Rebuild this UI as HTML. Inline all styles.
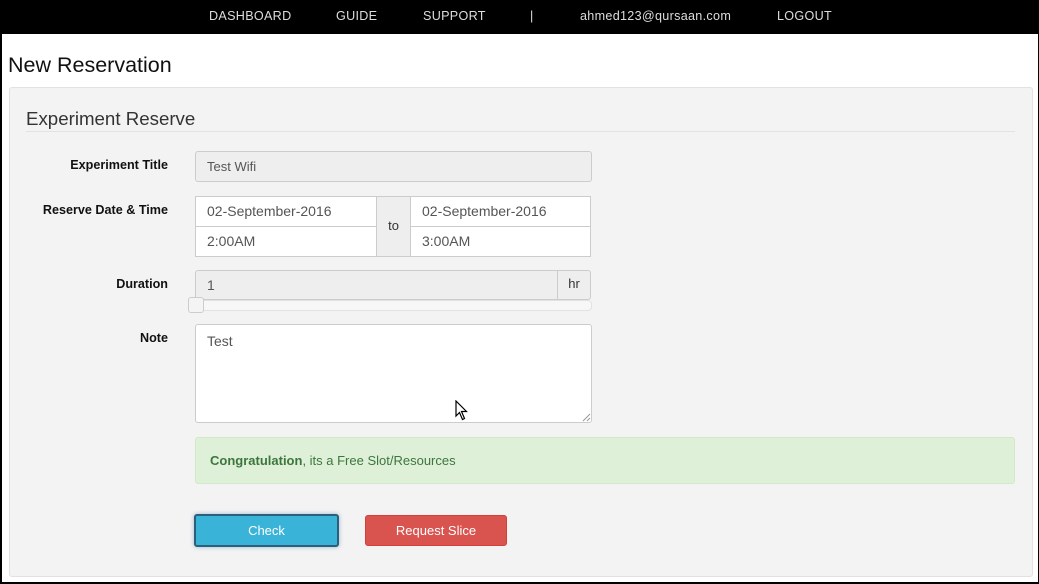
<!DOCTYPE html>
<html><head><meta charset="utf-8"><style>
*{box-sizing:border-box;margin:0;padding:0}
body{width:1039px;height:584px;background:#000;position:relative;overflow:hidden;font-family:"Liberation Sans",sans-serif;}
.a{position:absolute}
#page{left:2px;top:34px;width:1036px;height:548px;background:#fff}
.nav{top:0;height:34px;color:#ddd;font-size:12.6px;line-height:33px;letter-spacing:.3px}
.well{left:9px;top:87px;width:1024px;height:490px;background:#f3f3f3;border:1px solid #e2e2e2;border-radius:3px}
.lbl{font-size:12.6px;font-weight:bold;color:#111;text-align:right;width:168px;left:0}
.inp{background:#fff;border:1px solid #ccc;font-size:14px;color:#555;padding-left:11px}
</style></head><body>
<div class="a" id="page"></div>
<div class="a nav" style="left:209px">DASHBOARD</div>
<div class="a nav" style="left:336px">GUIDE</div>
<div class="a nav" style="left:423px">SUPPORT</div>
<div class="a nav" style="left:530px">|</div>
<div class="a nav" style="left:580px">ahmed123@qursaan.com</div>
<div class="a nav" style="left:777px">LOGOUT</div>
<div class="a" style="left:8px;top:53px;font-size:21.5px;color:#111">New Reservation</div>
<div class="a well"></div>
<div class="a" style="left:26px;top:108px;font-size:18.7px;color:#333">Experiment Reserve</div>
<div class="a" style="left:26px;top:131px;width:989px;height:1px;background:#e2e2e2"></div>

<div class="a lbl" style="top:158px">Experiment Title</div>
<div class="a inp" style="left:195px;top:151px;width:397px;height:31px;background:#eee;border-radius:3px;line-height:29px;font-size:13px">Test Wifi</div>

<div class="a lbl" style="top:203px">Reserve Date &amp; Time</div>
<div class="a inp" style="left:195px;top:196px;width:182px;height:31px;line-height:29px">02-September-2016</div>
<div class="a inp" style="left:195px;top:226px;width:182px;height:31px;line-height:29px">2:00AM</div>
<div class="a" style="left:376px;top:196px;width:35px;height:61px;background:#eee;border:1px solid #ccc;font-size:13px;color:#333;text-align:center;line-height:58px">to</div>
<div class="a inp" style="left:410px;top:196px;width:181px;height:31px;line-height:29px">02-September-2016</div>
<div class="a inp" style="left:410px;top:226px;width:181px;height:31px;line-height:29px">3:00AM</div>

<div class="a lbl" style="top:277px">Duration</div>
<div class="a inp" style="left:195px;top:270px;width:363px;height:30px;background:#eee;line-height:29px;border-radius:3px 0 0 3px">1</div>
<div class="a" style="left:557px;top:270px;width:34px;height:30px;background:#eee;border:1px solid #ccc;border-radius:0 3px 3px 0;font-size:13px;color:#333;text-align:center;line-height:26px">hr</div>
<div class="a" style="left:195px;top:300px;width:397px;height:11px;background:#f7f7f7;border:1px solid #e2e2e2;border-radius:4px"></div>
<div class="a" style="left:188px;top:297px;width:16px;height:16px;background:#f4f4f4;border:1px solid #ccc;border-radius:3px"></div>

<div class="a lbl" style="top:331px">Note</div>
<div class="a inp" style="left:195px;top:324px;width:397px;height:99px;border-radius:3px;padding-top:8px">Test</div>
<svg class="a" style="left:582px;top:413px" width="9" height="9"><path d="M1 8L8 1M5 8L8 5" stroke="#999" stroke-width="1"/></svg>
<svg class="a" style="left:455px;top:400px" width="14" height="21"><path d="M1 1L1 16L4.5 12.5L7.5 19.5L9.5 18.5L6.5 11.5L11.5 11.5Z" fill="#fff" stroke="#000" stroke-width="1.2"/></svg>

<div class="a" style="left:195px;top:437px;width:820px;height:47px;background:#dff0d8;border:1px solid #d0e9c6;border-radius:3px;color:#3c763d;font-size:13px;line-height:46px;padding-left:14px"><b>Congratulation</b>, its a Free Slot/Resources</div>

<div class="a" style="left:194px;top:514px;width:145px;height:33px;background:#39b3d7;border:2px solid #2d5f78;border-radius:3px;color:#fff;font-size:13px;text-align:center;line-height:29px;box-shadow:0 0 4px rgba(60,120,180,.5)">Check</div>
<div class="a" style="left:365px;top:515px;width:142px;height:31px;background:#d9534f;border:1px solid #d43f3a;border-radius:3px;color:#fff;font-size:13px;text-align:center;line-height:29px">Request Slice</div>
</body></html>
